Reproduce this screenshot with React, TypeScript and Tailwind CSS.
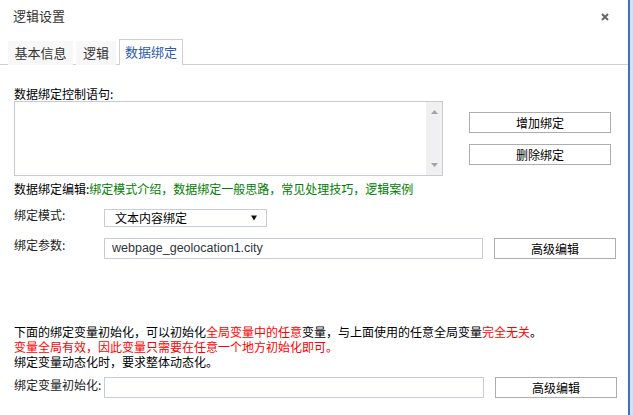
import React from "react";

const cjk = { fontFamily: '"Noto Sans CJK SC", "Noto Sans", sans-serif' };

function Btn({ children, className = "" }: { children: React.ReactNode; className?: string }) {
  return (
    <div
      className={`flex h-[21px] items-center justify-center border border-[#adadad] bg-white text-[12px] leading-none text-black ${className}`}
    >
      {children}
    </div>
  );
}

export default function App() {
  return (
    <div className="flex h-[415px] w-[633px] overflow-hidden bg-white text-[#222]" style={cjk}>
      <div className="flex w-[628px] flex-col">
        {/* header */}
        <div className="flex h-[39px] items-start justify-between pl-[13px] pr-[19px] pt-[7px]">
          <span className="text-[13px] leading-[18px] text-[#333]">逻辑设置</span>
          <svg className="mt-[6px] h-[8px] w-[8px]" viewBox="0 0 8 8">
            <path d="M1 1L7 7M7 1L1 7" stroke="#666" strokeWidth="2" />
          </svg>
        </div>

        {/* tabs */}
        <div className="flex h-[26px] items-end gap-[3px] border-b border-[#d0d0d0] pl-[8px]">
          <div className="mb-[-1px] flex h-[24px] w-[65px] items-center justify-center bg-[#f7f7f7] text-[13px] text-[#333]">
            基本信息
          </div>
          <div className="mb-[-1px] flex h-[24px] w-[40px] items-center justify-center bg-[#f7f7f7] text-[13px] text-[#333]">
            逻辑
          </div>
          <div className="mb-[-1px] flex h-[26px] w-[64px] items-center justify-center border border-b-0 border-[#cfcfcf] bg-white pb-[1px] text-[13px] text-[#2b5ca8]">
            数据绑定
          </div>
        </div>

        {/* content */}
        <div className="flex flex-col pl-[14px]">
          <div className="mt-[22px] h-[14px] text-[12px] leading-[14px] text-black">数据绑定控制语句:</div>

          <div className="flex">
            <div className="flex h-[75px] w-[429px] border border-[#c5cad3] bg-white">
              <div className="flex-1" />
              <div className="flex w-[16px] flex-col items-center justify-between bg-[#f0f0f0] py-[8px]">
                <svg width="7" height="4" viewBox="0 0 7 4">
                  <path d="M0 4L3.5 0L7 4Z" fill="#a3a3a3" />
                </svg>
                <svg width="7" height="4" viewBox="0 0 7 4">
                  <path d="M0 0L3.5 4L7 0Z" fill="#a3a3a3" />
                </svg>
              </div>
            </div>
            <div className="ml-[26px] flex flex-col gap-[11px] pt-[11px]">
              <Btn className="w-[142px]">增加绑定</Btn>
              <Btn className="w-[142px]">删除绑定</Btn>
            </div>
          </div>

          <div className="mt-[6px] h-[14px] text-[12px] leading-[14px] text-black">
            数据绑定编辑:
            <span className="text-[#008000]">绑定模式介绍，数据绑定一般思路，常见处理技巧，逻辑案例</span>
          </div>

          <div className="mt-[13px] flex h-[18px]">
            <div className="w-[90px] text-[12px] leading-[12px] text-[#222]">绑定模式:</div>
            <div className="flex w-[163px] items-center justify-between border border-[#c8ccd4] pl-[10px] pr-[9px] text-[12px] text-black">
              <span>文本内容绑定</span>
              <svg width="6" height="6" viewBox="0 0 6 6">
                <path d="M0 0.5L6 0.5L3 5.5Z" fill="#111" />
              </svg>
            </div>
          </div>

          <div className="mt-[11px] flex h-[21px]">
            <div className="w-[90px] pt-[1px] text-[12px] leading-[12px] text-[#222]">绑定参数:</div>
            <div
              className="flex w-[379px] items-center border border-[#c8ccd4] pl-[7px] text-[12.5px] text-[#2f3540]"
              style={{ fontFamily: '"Liberation Sans", Arial, sans-serif' }}
            >
              webpage_geolocation1.city
            </div>
            <Btn className="ml-[11px] w-[122px]">高级编辑</Btn>
          </div>

          <div className="mt-[65px] flex flex-col text-[12px] leading-[15px] text-black">
            <div>
              下面的绑定变量初始化，可以初始化<span className="text-[#ff0000]">全局变量中的任意</span>
              变量，与上面使用的任意全局变量<span className="text-[#ff0000]">完全无关</span>。
            </div>
            <div className="text-[#ff0000]">变量全局有效，因此变量只需要在任意一个地方初始化即可。</div>
            <div>绑定变量动态化时，要求整体动态化。</div>
          </div>

          <div className="mt-[8px] flex h-[21px]">
            <div className="w-[90px] pt-[2px] text-[12px] leading-[12px] text-[#222]">绑定变量初始化:</div>
            <div className="w-[380px] border border-[#c8ccd4]" />
            <Btn className="ml-[11px] w-[122px]">高级编辑</Btn>
          </div>
        </div>
      </div>
      <div className="w-[2px] bg-[#3d6fc4]" />
      <div className="w-[3px] bg-[#d8dfe9]" />
    </div>
  );
}
